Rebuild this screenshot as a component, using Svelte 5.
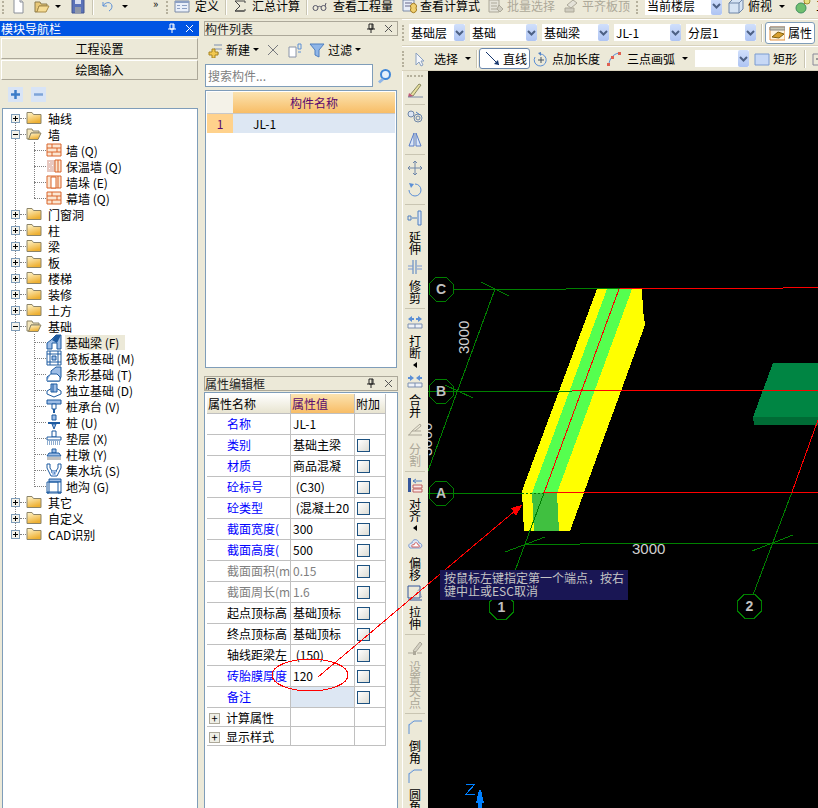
<script>
  const B = "#1d5aa0";
  const L = "#9dbde6";
  const O = "#d9642a";
  const G = "#aca899";

  const icons = {
    fileNew: [["M4 1h6l3 3v11H4z", "#fff", "#8a8f98"], ["M10 1v3h3", "#e8e8e8", "#8a8f98"]],
    open: [["M1 4h5l1 2h6v2H5L3 14H1z", "#e8c878", "#8c7a4a"], ["M5 8h10l-3 6H3z", "#f6dc94", "#a88c4a"]],
    save: [["M2 1h12v14H2z", "#5a72b8", "#44578f"], ["M5 1h6v5H5z", "#d8dff0"], ["M5 9h6v6H5z", "#9098a8"]],
    undo: [["M4 4v4h4M4 8c2-4 8-5 9 0 0 2-1 4-3 5", "none", "#5b8fd6"]],
    define: [["M1 3h14v11H1z", "#e9eff9", "#7b8aa6"], ["M1 3h14v2H1zM3 7h3v1H3zM3 10h3v1H3zM8 7h5v1H8zM8 10h5v1H8z", "#8ca0c4"]],
    sigma: [["M3 3h10v2M12 13H3l5-5-5-5M3 13h10v-2", "none", "#444"]],
    glasses: [["M1 10a2.5 2.5 0 1 0 5 0a2.5 2.5 0 1 0-5 0M9 10a2.5 2.5 0 1 0 5 0a2.5 2.5 0 1 0-5 0M6 9c1-1 2-1 3 0M13 8l1-3", "none", "#556"]],
    calc: [["M2 2h11v11H2z", "#e8eef8", "#7b8aa6"], ["M4 5h7M4 8h7", "none", "#668"], ["M10 10a3 3 0 1 0 5 0a3 3 0 1 0-5 0", "#f0d070", "#a07820"]],
    batch: [["M1 2h10v12H1z", "#e4e2d8", G], ["M3 5h6M3 8h6M3 11h6", "none", G], ["M11 7l4 4-3 3-3-3z", "#d0cdc0", G]],
    level: [["M2 10h9v4H2z", "#d0cdc0", G], ["M4 7l6-5 4 3-6 5z", "#e4e2d8", G]],
    cube: [["M1 5l4-4h10v10l-4 4H1z", "#d6e4f4", "#6e86a8"], ["M1 5h10v10M11 5l4-4", "none", "#6e86a8"]],
    globe: [["M3 12L12 3", "none", "#c05050"], ["M1 10a5 5 0 1 0 10 0a5 5 0 1 0-10 0", "#6fbf6f", "#3f8f5f"], ["M9 3a3 3 0 1 0 6 0a3 3 0 1 0-6 0", "#e8e080", "#a09030"]],
    newItem: [["M7 3h8M7 7h8M7 11h5", "none", "#7d8fb0"], ["M2 10h3V7h3v3h3v3H8v3H5v-3H2z", "#f2c850", "#a88420"]],
    del: [["M3 3l10 10M13 3L3 13", "none", "#77797e"]],
    copy: [["M2 5h7v10H2z", "#fff", "#8a94a8"], ["M11 2h3v5h-3zM11 10h3", "none", "#5b8fd6"]],
    filter: [["M1 2h14L10 8v7l-4-2V8z", "#8fb6e8", "#4f7fc0"]],
    search: [["M3 6.500a5.500 5.500 0 1 0 11 0a5.500 5.500 0 1 0-11 0z", "#3f86d8"], ["M5 6.500a3.500 3.500 0 1 0 7 0a3.500 3.500 0 1 0-7 0z", "#e6f0fb"], ["M5 10l2 2-4 3.500-2-2z", "#8fb6e8"]],
    attr: [["M1 2h15v13H1z", "#fff4e0", "#e09040"], ["M1 2h15v3H1z", "#c8c8b8", "#888"], ["M3 12l6-5 6 2-5 4z", "#d8a030", "#806010"]],
    pointer: [["M4 2v12l3-3 2 4 2-1-2-4h3z", "#f4f6fa", "#8aa0c0"]],
    line: [["M1 1l13 13", "none", "#16366e"], ["M14 14l-5-1 4-4z", "#16366e"]],
    ptLen: [["M5 2l3-1v4z", "#4f7fc0"], ["M7 3a6 6 0 1 1-5 3", "none", "#5b8fd6"], ["M8 6v6M5 9h6", "none", "#456"]],
    arc: [["M3 14c0-6 4-11 10-12", "none", "#5b8fd6"], ["M1 12h3v3H1zM5 5h3v3H5zM12 1h3v3h-3z", "#e06050"]],
    rect: [["M1 3h14v11H1z", "#c7d8f5", "#7b9bd0"]],
    more: [["M2 3h12v11H2z", "none", "#889"], ["M8 5v6M5 8h6", "none", "#445"]],
    paint: [["M3 13l9-11 2 1-8 11z", "#e8e0a0", "#8a8a60"], ["M2 11l4 3-2 1H1z", "#c05a78"], ["M1 15h15", "none", "#7b8aa6"]],
    circles: [["M1 4a3 3 0 1 0 6 0a3 3 0 1 0-6 0", "#dde6f4", "#6e86a8"], ["M7 8a4 4 0 1 0 8 0a4 4 0 1 0-8 0M9 8a2 2 0 1 0 4 0a2 2 0 1 0-4 0", "none", "#6e86a8"], ["M9 2l4 3", "none", "#4f7fc0"]],
    mirror: [["M7 1L2 14h5zM9 1l5 13H9z", "#dbe6f6", "#5b7fc8"]],
    move: [["M8 1v14M1 8h14M8 1L6 3M8 1l2 2M8 15l-2-2M8 15l2-2M1 8l2-2M1 8l2 2M15 8l-2-2M15 8l-2 2", "none", "#6e86a8"]],
    rotate: [["M8 2a6 6 0 1 1-6 6", "none", "#5b8fd6"], ["M2 1l5 1-3 4z", "#5b8fd6"]],
    extend: [["M11 1h3v14h-3z", "#dbe6f6", "#4f7fc0"], ["M1 6h3v4H1zM5 8h5", "none", "#4f7fc0"]],
    trim: [["M6 1v14M9 1v14", "none", "#4f7fc0"], ["M1 7h5M1 10h5M10 7h5M10 10h5", "none", "#7d9ad0"]],
    split: [["M1 5l4-3v2h2v2H5v2zM15 5l-4-3v2H9v2h2v2z", "#5b8fd6"], ["M1 10h14v4H1zM8 10v4", "#eef2f8", "#7d8fb0"]],
    merge: [["M7 5L3 2v2H1v2h2v2zM9 5l4-3v2h2v2h-2v2z", "#5b8fd6"], ["M1 10h14v4H1zM8 10v4", "#eef2f8", "#7d8fb0"]],
    cutGrey: [["M1 13h14M2 13l3-4h9M5 9l8-7 1 2-6 5", "none", G]],
    align: [["M1 1h3v14H1z", "#34569c"], ["M6 8h9v3H6zM6 12h9v3H6z", "#f8e8e8", "#c06060"], ["M6 4h9M6 4l3-2M6 4l3 2", "none", "#4f7fc0"]],
    offset: [["M3 12c-3-3 0-5 2-5 0-4 6-5 7 0 3 0 4 4 1 5z", "#dde6f4", "#7d9ad0"], ["M5 11c-1-2 1-3 2-2 0-3 4-3 4 0 2 0 2 2 1 2z", "#fff", "#d06060"]],
    stretch: [["M1 1h12v12H1z", "none", "#34569c"], ["M7 13l5-9 3 9", "none", "#8090b0", "1 1"], ["M1 15h14", "none", "#34569c"]],
    grip: [["M6 11l7-9 2 2-7 9z", "#d4d1c4", G], ["M1 13h5M10 13h5", "none", G], ["M6 11h3v4H6z", G]],
    chamfer: [["M2 15V6l5-4h8", "none", "#5b8fd6"], ["M1 6l5-4", "none", "#9dbde6", "1 1"]],
    brick: [["M1 2h14v12H1z", "#fbe6d2", O], ["M1 6h14M1 10h14M6 2v4M11 6v4M6 10v4", "none", O]],
    insul: [["M1 2h8v12H1z", "#e8c8c0"], ["M9 2h6v12H9z", "#fbe6d2", O], ["M12 2v12", "none", O], ["M3 4h1v1H3zM6 7h1v1H6zM3 10h1v1H3z", "#fff"]],
    pier: [["M1 2h14v12H1z", "#fbe6d2", O], ["M5 3h5v11H5z", "#fff", O], ["M12 2v12", "none", O]],
    beam: [["M1 15V9l4-3 5-5h5v14h-4V9H6v6z", L, B], ["M10 1l-4 5 5 3 4-8", B]],
    raft: [["M1 1h14v14H1z", "#fff", B], ["M4 1v14M12 1v14M1 4h14M1 12h14", "none", B], ["M6 6h4v4H6z", L, B]],
    strip: [["M1 15v-4l4-3V5l5-4h5v10l-2 4z", L, B], ["M5 8h6l3 3v4H1", "#fff", B]],
    iso: [["M1 9l7-4 7 4v3l-7 3-7-3z", "#fff", B], ["M5 2h6v8H5z", L, B], ["M7 2v8", "none", B]],
    cap: [["M1 2h14v4H1z", L, B], ["M6 6h4v5H6z", "#fff", B], ["M7 11h2v4H7z", B]],
    pile: [["M6 1h4v5H6z", L, B], ["M2 8h12v2H2z", B], ["M6 10h4l-2 5z", L, B]],
    cushion: [["M6 1h4v6H6z", "#fff", B], ["M1 7h14v3H1z", "#fff", B], ["M1 12h14M1 14h14", "none", B, "1 1"]],
    stub: [["M6 3h4v4H6z", L, B], ["M3 7h10l2 3H1z", L, B], ["M1 11h14v3H1z", "#c0c0c0"]],
    sump: [["M1 2v4l4 8h6l4-8V2h-3v4l-2 3H6L4 6V2z", "#fff", B], ["M5 9h6l-2 5H7z", L], ["M5 10h1M8 11h1M10 9h1", "none", B]],
    trench: [["M3 1h12v3H3z", L, B], ["M1 4h2v11H1zM12 4h3v11h-3zM1 14h14v1H1z", "#fff", B], ["M3 4h9", "none", B]]
  };

  const subs = {
    wall: [
      { name: "墙 (Q)", icon: "brick" },
      { name: "保温墙 (Q)", icon: "insul" },
      { name: "墙垛 (E)", icon: "pier" },
      { name: "幕墙 (Q)", icon: "brick" }
    ],
    base: [
      { name: "基础梁 (F)", icon: "beam", active: true },
      { name: "筏板基础 (M)", icon: "raft" },
      { name: "条形基础 (T)", icon: "strip" },
      { name: "独立基础 (D)", icon: "iso" },
      { name: "桩承台 (V)", icon: "cap" },
      { name: "桩 (U)", icon: "pile" },
      { name: "垫层 (X)", icon: "cushion" },
      { name: "柱墩 (Y)", icon: "stub" },
      { name: "集水坑 (S)", icon: "sump" },
      { name: "地沟 (G)", icon: "trench" }
    ]
  };

  const tree = [
    { name: "轴线" },
    { name: "墙", children: subs.wall },
    { name: "门窗洞" },
    { name: "柱" },
    { name: "梁" },
    { name: "板" },
    { name: "楼梯" },
    { name: "装修" },
    { name: "土方" },
    { name: "基础", children: subs.base },
    { name: "其它" },
    { name: "自定义" },
    { name: "CAD识别" }
  ];

  const props = [
    { name: "名称", value: "JL-1", tone: "blue", noCheck: true },
    { name: "类别", value: "基础主梁", tone: "blue" },
    { name: "材质", value: "商品混凝", tone: "blue" },
    { name: "砼标号", value: " (C30)", tone: "blue" },
    { name: "砼类型", value: " (混凝土20", tone: "blue" },
    { name: "截面宽度(", value: "300", tone: "blue" },
    { name: "截面高度(", value: "500", tone: "blue" },
    { name: "截面面积(m", value: "0.15", tone: "grey" },
    { name: "截面周长(m", value: "1.6", tone: "grey" },
    { name: "起点顶标高", value: "基础顶标", tone: "black" },
    { name: "终点顶标高", value: "基础顶标", tone: "black" },
    { name: "轴线距梁左", value: " (150)", tone: "black" },
    { name: "砖胎膜厚度", value: "120", tone: "blue" },
    { name: "备注", value: "", tone: "blue", empty: true }
  ];

  const sideTools = [
    { icon: "paint", sep: true },
    { icon: "circles" },
    { icon: "mirror", sep: true },
    { icon: "move" },
    { icon: "rotate", sep: true },
    { icon: "extend", label: "延伸" },
    { icon: "trim", label: "修剪", sep: true },
    { icon: "split", label: "打断", more: true },
    { icon: "merge", label: "合并" },
    { icon: "cutGrey", label: "分割", off: true, sep: true },
    { icon: "align", label: "对齐", more: true },
    { icon: "offset", label: "偏移" },
    { icon: "stretch", label: "拉伸", sep: true },
    { icon: "grip", label: "设置夹点", off: true, sep: true },
    { icon: "chamfer", label: "倒角" },
    { icon: "chamfer", label: "圆角" }
  ];

  const bubbles = [
    { x: 441, y: 289, t: "C" },
    { x: 441, y: 391, t: "B" },
    { x: 441, y: 493, t: "A" },
    { x: 501.5, y: 607, t: "1" },
    { x: 749.5, y: 606, t: "2" }
  ];

  function octagon(x, y, r) {
    const pts = [];
    for (let i = 0; i < 8; i++) {
      const a = Math.PI / 8 + (i * Math.PI) / 4;
      pts.push((x + r * Math.cos(a)).toFixed(1) + "," + (y + r * Math.sin(a)).toFixed(1));
    }
    return pts.join(" ");
  }
</script>

{#snippet ic(name, cls = "")}
  <svg class="ic {cls}" width="16" height="16" viewBox="0 0 16 16">
    {#each icons[name] as [d, fill, stroke, dash]}
      <path {d} fill={fill || "none"} stroke={stroke || "none"} stroke-dasharray={dash} />
    {/each}
  </svg>
{/snippet}

{#snippet combo(text, cls)}
  <div class="combo {cls}">
    <span class="combo-text">{text}</span>
    <span class="combo-btn">
      <svg width="9" height="6" viewBox="0 0 9 6"><path d="M1 1l3.5 3.5L8 1" fill="none" stroke="#4d6185" stroke-width="2" /></svg>
    </span>
  </div>
{/snippet}

{#snippet panelTitle(text, cls = "")}
  <div class="title {cls}">
    <span class="title-text">{text}</span>
    <svg width="10" height="11" viewBox="0 0 10 11" class="pin"><path d="M3 1h4v5H3zM1 6h8M5 6v4M6 1v5" fill="none" stroke="currentColor" /></svg>
    <svg width="9" height="9" viewBox="0 0 9 9" class="close"><path d="M1 1l7 7M8 1L1 8" fill="none" stroke="currentColor" /></svg>
  </div>
{/snippet}

{#snippet folder(open)}
  <svg class="ic" width="16" height="14" viewBox="0 0 16 14">
    {#if open}
      <path d="M1 2h5l1 2h6v2H5L3 12H1z" fill="#f4e6bc" stroke="#8c8468" />
      <path d="M5 6h10l-3 6.500H2.500z" fill="url(#foldGrad)" stroke="#8c8468" />
    {:else}
      <path d="M1 1.500h5l1.500 2H15v9H1z" fill="url(#foldGrad)" stroke="#8c8468" />
    {/if}
  </svg>
{/snippet}

<svg class="defs" width="0" height="0" aria-hidden="true">
  <defs>
    <linearGradient id="foldGrad" x1="0" y1="0" x2="0.4" y2="1">
      <stop offset="0" stop-color="#fff6d0" />
      <stop offset="1" stop-color="#eeb032" />
    </linearGradient>
  </defs>
</svg>

<div class="app">
  <div class="topbar">
    <span class="grip ml2"></span>
    {@render ic("fileNew", "ml6")}
    {@render ic("open", "ml8")}
    <span class="caret ml5"></span>
    {@render ic("save", "ml9")}
    <span class="sep ml6"></span>
    {@render ic("undo", "ml6")}
    <span class="caret ml7"></span>
    <span class="chev">»</span>
    <span class="grip ml5"></span>
    {@render ic("define", "ml6")}
    <span class="ml5">定义</span>
    <span class="sep ml6"></span>
    {@render ic("sigma", "ml6")}
    <span class="ml4">汇总计算</span>
    <span class="sep ml6"></span>
    {@render ic("glasses", "ml5")}
    <span class="ml5">查看工程量</span>
    {@render ic("calc", "ml8")}
    <span class="ml3">查看计算式</span>
    {@render ic("batch", "ml8")}
    <span class="ml3 off">批量选择</span>
    {@render ic("level", "ml8")}
    <span class="ml3 off">平齐板顶</span>
    <span class="grip ml6"></span>
    {@render combo("当前楼层", "ml7 w77")}
    {@render ic("cube", "ml6")}
    <span class="ml4">俯视</span>
    <span class="caret ml7"></span>
    {@render ic("globe", "ml10")}
    <span class="ml5">三</span>
  </div>

  <div class="main">
    <aside class="nav">
      {@render panelTitle("模块导航栏", "active")}
      <button class="nav-btn first">工程设置</button>
      <button class="nav-btn">绘图输入</button>
      <div class="expand-bar">
        <span class="square"><svg width="11" height="11" viewBox="0 0 11 11"><path d="M1 5.500h9M5.500 1v9" stroke="#3c7cc8" stroke-width="2.500" /></svg></span>
        <span class="square minus"><svg width="11" height="11" viewBox="0 0 11 11"><path d="M1 5.500h9" stroke="#7ea4d8" stroke-width="2.500" /></svg></span>
      </div>
      <div class="tree">
        <i class="vline root"></i>
        <i class="vline wall"></i>
        <i class="vline base"></i>
        {#each tree as node}
          <div class="row">
            <span class="exp">
              <svg width="9" height="9" viewBox="0 0 9 9"><path d={node.children ? "M2 4.500h5" : "M2 4.500h5M4.500 2v5"} stroke="#000" /></svg>
            </span>
            <span class="dots short"></span>
            {@render folder(!!node.children)}
            <span class="label">{node.name}</span>
          </div>
          {#if node.children}
            {#each node.children as child}
              <div class="row child">
                <span class="dots long"></span>
                {@render ic(child.icon)}
                <span class="label" class:picked={child.active}>{child.name}</span>
              </div>
            {/each}
          {/if}
        {/each}
      </div>
    </aside>

    <section class="mid">
      {@render panelTitle("构件列表")}
      <div class="list-tools">
        {@render ic("newItem")}
        <span class="ml3">新建</span>
        <span class="caret ml3"></span>
        {@render ic("del", "ml6")}
        {@render ic("copy", "ml6")}
        {@render ic("filter", "ml6")}
        <span class="ml3">过滤</span>
        <span class="caret ml3"></span>
      </div>
      <div class="search">
        <div class="search-input">搜索构件...</div>
        <span class="search-btn">{@render ic("search")}</span>
      </div>
      <div class="list-box">
        <div class="list-head">
          <span class="corner"></span>
          <span class="col-name">构件名称</span>
        </div>
        <div class="list-row">
          <span class="num">1</span>
          <span class="row-val">JL-1</span>
        </div>
      </div>

      {@render panelTitle("属性编辑框", "props-title")}
      <div class="props-box">
        <div class="prow head">
          <span class="ph">属性名称</span>
          <span class="ph sel">属性值</span>
          <span class="ph">附加</span>
        </div>
        {#each props as p}
          <div class="prow">
            <span class="pname {p.tone}">{p.name}</span>
            <span class="pval" class:grey={p.tone === "grey"} class:blank={p.empty}>{p.value}</span>
            <span class="pchk">{#if !p.noCheck}<i class="box"></i>{/if}</span>
          </div>
        {/each}
        <div class="prow group">
          <span class="pgroup"><i class="plus">+</i>计算属性</span><span class="pval"></span><span class="pchk"></span>
        </div>
        <div class="prow group">
          <span class="pgroup"><i class="plus">+</i>显示样式</span><span class="pval"></span><span class="pchk"></span>
        </div>
      </div>
    </section>

    <section class="right">
      <div class="tb tb2">
        <span class="grip"></span>
        {@render combo("基础层", "ml5 w56")}
        {@render combo("基础", "ml5 w67")}
        {@render combo("基础梁", "ml5 w67")}
        {@render combo("JL-1", "ml5 w67")}
        {@render combo("分层1", "ml5 w70")}
        <span class="sep ml5"></span>
        <span class="attr-btn">{@render ic("attr")}<span>属性</span></span>
      </div>
      <div class="tb tb3">
        <span class="grip"></span>
        {@render ic("pointer", "ml8")}
        <span class="ml6">选择</span>
        <span class="caret ml7"></span>
        <span class="sep ml5"></span>
        <span class="line-btn">{@render ic("line")}<span>直线</span></span>
        {@render ic("ptLen", "ml3")}
        <span class="ml3">点加长度</span>
        {@render ic("arc", "ml6")}
        <span class="ml5">三点画弧</span>
        <span class="caret ml7"></span>
        {@render combo("", "ml7 w54")}
        {@render ic("rect", "ml5")}
        <span class="ml3">矩形</span>
        <span class="sep ml7"></span>
        {@render ic("more", "ml6")}
      </div>
      <div class="work">
        <div class="vbar">
          <span class="vgrip"></span>
          {#each sideTools as t}
            <div class="vitem" class:off={t.off} class:labelled={t.label}>
              {@render ic(t.icon)}
              {#if t.label}
                <div class="vlabel">{t.label}</div>
              {/if}
              {#if t.more}<i class="vmore"></i>{/if}
            </div>
            {#if t.sep}<hr class="vsep" />{/if}
          {/each}
        </div>

        <div class="canvas">
          <svg class="scene" viewBox="428 71 390 737" width="390" height="737" shape-rendering="crispEdges">
            <!-- slab on axis 2 -->
            <polygon points="773,363 818,363 818,417 753,417" fill="#008543" />
            <polygon points="753,417 818,417 818,425 754,425" fill="#006b35" />

            <!-- foundation beam -->
            <polygon points="597,289 642,289 643,310 645,325 570,531 524,531 522,492 523,488" fill="#ffff00" />
            <polygon points="607,289 632,289 557,493 532,493" fill="#55ff4f" />
            <polygon points="532,493 557,493 559,531 534,531" fill="#40c040" />

            <!-- axes -->
            <g fill="none" stroke="#008000">
              <path d="M453 289H566M566 288.500H620" />
              <path d="M428 391H572" />
              <path d="M428 493H522" />
              <path d="M522 493H543" stroke-dasharray="2 2" />
              <path d="M495 289L428 471" />
              <path d="M481 282L509 296M445 385L473 398" />
              <path d="M544 493L506 595" />
              <path d="M525 544H580M580 543H818" />
              <path d="M505 552L545 537M752 551L793 535" />
              <path d="M792 492L753 595" />
            </g>
            <g fill="none" stroke="#ff0000">
              <path d="M620 288.500H783M783 287.500H818" />
              <path d="M572 390.500H818" />
              <path d="M543 492.500H577M577 492H818" />
              <path d="M619 289L544 493" />
              <path d="M818 420L792 492" />
            </g>

            {#each bubbles as b}
              <polygon points={octagon(b.x, b.y, 13)} fill="none" stroke="#008000" />
              <text x={b.x} y={b.y + 5} class="bubble" text-anchor="middle">{b.t}</text>
            {/each}

            <text class="dim" transform="translate(469 354) rotate(-90)">3000</text>
            <text class="dim" transform="translate(432 456) rotate(-90)">3000</text>
            <text class="dim" x="632" y="554">3000</text>

            <path d="M466 784H475L466 794H475" fill="none" stroke="#0080ff" />
            <polygon points="479,790 481,790 484,803 482,803 482,808 478,808 478,803 476,803" fill="#0080ff" />
          </svg>
          <div class="tip">按鼠标左键指定第一个端点，按右键中止或ESC取消</div>
        </div>
      </div>
    </section>
  </div>

  <svg class="overlay" viewBox="0 0 818 808" width="818" height="808">
    <ellipse cx="310" cy="675" rx="38" ry="16" fill="none" stroke="#ff0000" />
    <path d="M318 677L516 510" fill="none" stroke="#ff0000" />
    <polygon points="511,508 522,505 516,516" fill="#ff0000" />
  </svg>
</div>

<style>
  :global(body) {
    margin: 0;
    background: #ece9d8;
  }

  .defs {
    position: absolute;
  }

  .app {
    position: relative;
    width: 818px;
    height: 808px;
    overflow: hidden;
    background: #ece9d8;
    color: #000;
    font-family: "Noto Sans CJK SC", "Liberation Sans", sans-serif;
    font-size: 12px;
    line-height: 14px;
    display: flex;
    flex-direction: column;
  }

  .ml2 { margin-left: 2px; }
  .ml3 { margin-left: 3px; }
  .ml4 { margin-left: 4px; }
  .ml5 { margin-left: 5px; }
  .ml6 { margin-left: 6px; }
  .ml7 { margin-left: 7px; }
  .ml8 { margin-left: 8px; }
  .ml9 { margin-left: 9px; }
  .ml10 { margin-left: 10px; }
  .w54 { width: 54px; }
  .w56 { width: 56px; }
  .w67 { width: 67px; }
  .w70 { width: 70px; }
  .w77 { width: 77px; }

  .ic {
    display: block;
    flex: none;
  }

  .off {
    color: #aca899;
  }

  .topbar {
    flex: none;
    display: flex;
    align-items: center;
    padding-bottom: 6px;
    box-sizing: border-box;
    height: 19px;
    border-bottom: 1px solid #d8d2bd;
    white-space: nowrap;
  }

  .topbar > *,
  .tb > *,
  .list-tools > * {
    flex: none;
  }

  .grip {
    width: 0;
    height: 16px;
    border-left: 2px dotted #b5b09c;
  }

  .sep {
    width: 1px;
    height: 18px;
    background: #c9c5b2;
    box-shadow: 1px 0 #fff;
  }

  .caret {
    width: 0;
    height: 0;
    border-left: 3px solid transparent;
    border-right: 3px solid transparent;
    border-top: 3px solid #000;
  }

  .chev {
    margin-left: 25px;
    width: 8px;
    font-size: 11px;
    margin-top: -6px;
  }

  .combo {
    display: flex;
    align-items: center;
    justify-content: space-between;
    height: 17px;
    box-sizing: border-box;
    background: #fff;
    white-space: nowrap;
    overflow: hidden;
  }

  .combo-text {
    padding-left: 2px;
  }

  .combo-btn {
    width: 11px;
    height: 100%;
    flex: none;
    display: flex;
    align-items: center;
    justify-content: center;
    background: linear-gradient(#d0dffb, #aec4f3);
    border-radius: 2px;
  }

  .main {
    flex: 1;
    display: flex;
    min-height: 0;
  }

  .nav {
    width: 199px;
    flex: none;
    padding-top: 2px;
    box-sizing: border-box;
    display: flex;
    flex-direction: column;
  }

  .title {
    height: 15px;
    flex: none;
    display: flex;
    align-items: center;
    box-sizing: border-box;
    border: 1px solid #aca899;
    color: #222;
    white-space: nowrap;
  }

  .title-text {
    flex: 1;
  }

  .pin {
    margin-right: 8px;
  }

  .close {
    margin-right: 4px;
    color: #555;
  }

  .title.active {
    background: #0054e3;
    border-color: #0054e3;
    color: #fff;
  }

  .title.active .close {
    color: #fff;
  }

  .nav-btn {
    margin: 1px 1px 0;
    height: 20px;
    flex: none;
    padding: 0;
    font: inherit;
    color: #000;
    background: #ece9d8;
    border: 1px solid #aca899;
    border-top-color: #fff;
    border-left-color: #fff;
  }

  .nav-btn.first {
    margin-top: 2px;
    height: 21px;
  }

  .expand-bar {
    height: 28px;
    flex: none;
    display: flex;
    gap: 8px;
    align-items: flex-start;
    box-sizing: border-box;
    padding: 7px 0 0 8px;
  }

  .square {
    width: 15px;
    height: 15px;
    display: flex;
    align-items: center;
    justify-content: center;
    background: #d8e4f6;
  }

  .tree {
    position: relative;
    flex: 1;
    margin: 0 1px 0 2px;
    padding-top: 1px;
    background: #fff;
    border: 1px solid #7f9db9;
    border-bottom: none;
  }

  .vline {
    position: absolute;
    width: 0;
    border-left: 1px dotted #808080;
  }

  .vline.root { left: 12px; top: 9px; height: 416px; }
  .vline.wall { left: 31px; top: 33px; height: 56px; }
  .vline.base { left: 31px; top: 225px; height: 153px; }

  .row {
    position: relative;
    height: 16px;
    display: flex;
    align-items: center;
    padding-left: 8px;
    white-space: nowrap;
  }

  .exp {
    width: 9px;
    height: 9px;
    flex: none;
    box-sizing: border-box;
    background: #f4f2ea;
    outline: 1px solid #7f9db9;
    outline-offset: -1px;
    display: block;
    line-height: 0;
    z-index: 1;
  }

  .dots {
    flex: none;
    height: 0;
    border-top: 1px dotted #808080;
  }

  .dots.short {
    width: 6px;
  }

  .row.child {
    padding-left: 31px;
  }

  .dots.long {
    width: 12px;
  }

  .label {
    margin-left: 5px;
    padding: 0 1px;
    line-height: 15px;
  }

  .row.child .label {
    margin-left: 3px;
  }

  .label.picked {
    background: #ece9d8;
    padding-right: 6px;
  }

  .mid {
    width: 194px;
    margin-left: 5px;
    flex: none;
    padding-top: 2px;
    box-sizing: border-box;
    display: flex;
    flex-direction: column;
  }

  .list-tools {
    height: 25px;
    flex: none;
    margin-top: 1px;
    display: flex;
    align-items: center;
    padding-left: 3px;
    white-space: nowrap;
  }

  .search {
    display: flex;
    margin: 2px 0 0 1px;
    height: 23px;
    flex: none;
  }

  .search-input {
    width: 168px;
    box-sizing: border-box;
    background: #fff;
    border: 1px solid #7f9db9;
    color: #808080;
    padding-left: 2px;
    line-height: 21px;
  }

  .search-btn {
    margin-left: 4px;
    align-self: center;
  }

  .list-box {
    margin: 3px 1px 0;
    height: 278px;
    flex: none;
    box-sizing: border-box;
    background: #fff;
    border: 1px solid #7f9db9;
    padding: 1px;
  }

  .list-head,
  .list-row {
    display: grid;
    grid-template-columns: 26px 162px;
    align-items: stretch;
    text-align: center;
  }

  .list-head {
    height: 21px;
    line-height: 21px;
  }

  .corner {
    background: #f4f2e8;
  }

  .col-name {
    color: #5a0a6e;
    background: linear-gradient(#fbe3b0, #f8bd66);
  }

  .list-row {
    height: 19px;
    line-height: 19px;
    border-top: 1px solid #c8c8c8;
  }

  .num {
    color: #5a0a6e;
    background: #ffd28c;
  }

  .row-val {
    background: #dde7f3;
    text-align: left;
    padding-left: 20px;
  }

  :global(.title).props-title {
    margin-top: 8px;
  }

  .props-box {
    flex: 1;
    margin-top: 1px;
    box-sizing: border-box;
    background: #fff;
    border: 1px solid #7f9db9;
    border-bottom: none;
    padding: 1px 0 0 2px;
  }

  .prow {
    display: grid;
    grid-template-columns: 84px 64px 31px;
    height: 21px;
    width: 179px;
  }

  .prow > span {
    box-sizing: border-box;
    border-right: 1px solid #c0c0c0;
    border-bottom: 1px solid #c0c0c0;
    overflow: hidden;
    white-space: nowrap;
    line-height: 20px;
  }

  .prow.head {
    height: 20px;
  }

  .prow .ph {
    padding-left: 1px;
    background: linear-gradient(#fff, #e8e4d0);
  }

  .prow .ph.sel {
    color: #5a0a6e;
    background: linear-gradient(#fbe3b0, #f8bd66);
  }

  .pname {
    padding-left: 20px;
    letter-spacing: 0;
  }

  .pname.blue { color: #0000ff; }
  .pname.grey { color: #808080; }

  .pval {
    padding-left: 2px;
    white-space: pre !important;
  }

  .pval.grey {
    color: #808080;
  }

  .pval.blank {
    background: #dde7f3;
  }

  .pchk {
    display: flex;
    align-items: center;
    padding-left: 2px;
  }

  .box {
    width: 13px;
    height: 13px;
    box-sizing: border-box;
    border: 1px solid #1c5180;
    background: linear-gradient(135deg, #fff, #dcdcd4);
  }

  .prow.group {
    height: 19px;
  }

  .prow .pgroup {
    display: flex;
    align-items: center;
    gap: 6px;
    padding: 2px 0 0 2px;
    line-height: 16px;
  }

  .plus {
    width: 11px;
    height: 11px;
    box-sizing: border-box;
    border: 1px solid #aca899;
    background: #f0efe6;
    font-style: normal;
    font-size: 11px;
    line-height: 8px;
    text-align: center;
  }

  .right {
    flex: 1;
    min-width: 0;
    display: flex;
    flex-direction: column;
    padding-left: 4px;
    overflow: hidden;
  }

  .tb {
    flex: none;
    display: flex;
    align-items: center;
    white-space: nowrap;
    box-sizing: border-box;
    border-top: 1px solid #fff;
    border-bottom: 1px solid #d8d2bd;
    margin-left: 0;
  }

  .tb2 {
    height: 27px;
  }

  .tb3 {
    height: 25px;
  }

  .attr-btn {
    margin-left: 3px;
    display: flex;
    align-items: center;
    gap: 3px;
    height: 22px;
    width: 50px;
    box-sizing: border-box;
    padding-left: 3px;
    background: #fff;
    border: 1px solid #7f9db9;
    border-radius: 3px;
  }

  .line-btn {
    margin-left: 2px;
    display: flex;
    align-items: center;
    gap: 2px;
    height: 21px;
    width: 51px;
    box-sizing: border-box;
    padding-left: 5px;
    background: #fff;
    border: 1px solid #6a87ad;
    border-radius: 3px;
  }

  .work {
    flex: 1;
    min-height: 0;
    display: flex;
  }

  .vbar {
    width: 26px;
    flex: none;
    overflow: hidden;
    display: flex;
    flex-direction: column;
    align-items: center;
    padding-right: 2px;
    border-left: 1px solid #fff;
    box-sizing: border-box;
  }

  .vgrip {
    flex: none;
    width: 16px;
    height: 0;
    margin: 4px 0 5px;
    border-top: 2px dotted #b5b09c;
  }

  .vitem {
    flex: none;
    display: flex;
    flex-direction: column;
    align-items: center;
    padding-bottom: 6px;
  }

  .vitem.labelled {
    padding-bottom: 4px;
  }

  .vlabel {
    margin-top: 5px;
    writing-mode: vertical-rl;
    text-orientation: upright;
    line-height: 14px;
    white-space: nowrap;
  }

  .vmore {
    width: 0;
    height: 0;
    margin: 3px 0 1px;
    border-top: 3px solid transparent;
    border-bottom: 3px solid transparent;
    border-right: 4px solid #000;
  }

  .vsep {
    flex: none;
    width: 20px;
    height: 1px;
    margin: 0 0 5px;
    border: none;
    background: #c9c5b2;
  }

  .canvas {
    position: relative;
    flex: 1;
    background: #000;
    overflow: hidden;
  }

  .scene {
    display: block;
  }

  .bubble {
    font-family: "Liberation Sans", sans-serif;
    font-size: 14px;
    font-weight: bold;
    fill: #c0c0c0;
  }

  .dim {
    font-family: "Liberation Sans", sans-serif;
    font-size: 15px;
    fill: #d0d0d0;
  }

  .tip {
    position: absolute;
    left: 12px;
    top: 499px;
    width: 188px;
    height: 30px;
    z-index: 2;
    box-sizing: border-box;
    padding: 1px 0 0 4px;
    background: #191654;
    color: #c4c4c4;
    line-height: 13px;
  }

  .overlay {
    position: absolute;
    left: 0;
    top: 0;
    pointer-events: none;
    shape-rendering: crispEdges;
  }
</style>
